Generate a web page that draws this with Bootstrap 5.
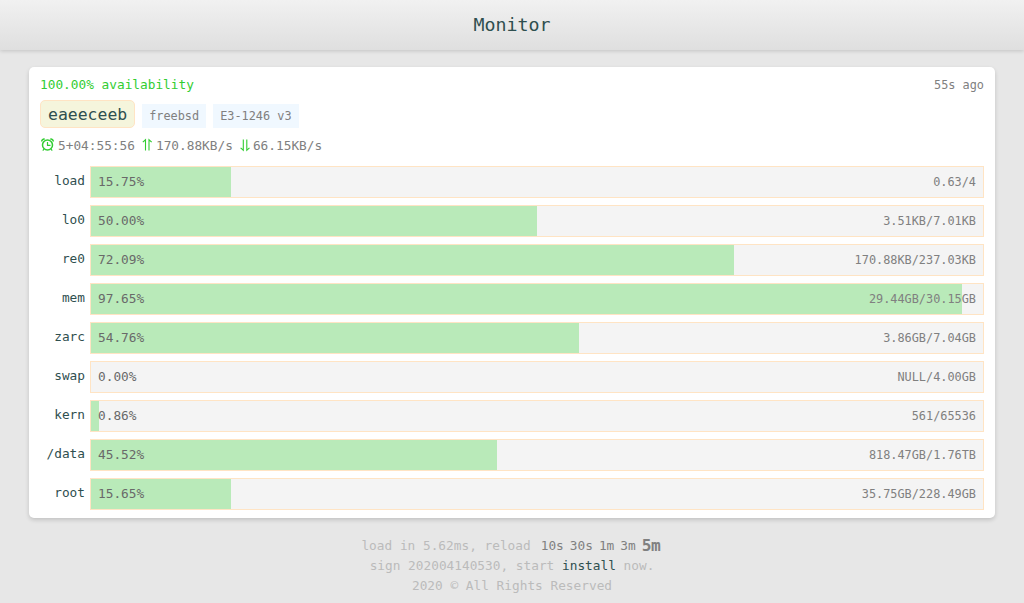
<!DOCTYPE html>
<html lang="en">
<head>
<meta charset="utf-8">
<meta name="viewport" content="width=device-width, initial-scale=1">
<title>Monitor</title>
<link href="https://cdn.jsdelivr.net/npm/bootstrap@5.3.0/dist/css/bootstrap.min.css" rel="stylesheet">
<style>
body{font-family:"DejaVu Sans Mono","Liberation Mono",monospace;font-size:12.79px;line-height:20px;color:gray;background:#e7e7e7;height:603px;overflow:hidden}
.topbar{height:50px;font-size:18.27px;color:#2f4f4f;background:linear-gradient(#f1f1f1,#dfdfdf);box-shadow:0 1px 4px rgba(0,0,0,.16)}
.host{margin:17px 29px 0;height:451px;padding:8px 11px 0;border:0;border-radius:5px;box-shadow:0 2px 4px rgba(0,0,0,.16)}
.fs-sm{font-size:11.87px}
.avail{color:#32cd32}
.host-name{height:28px;padding:0 7px;font-size:16.44px;line-height:27px;color:#2f4f4f;background:#f5f5dc;border:1px solid #ffe4c4;border-radius:5px}
.tag{height:24px;padding:0 7px;line-height:24px;background:#f0f8ff}
.tags{gap:7px;margin-top:5px}
.stats{margin-top:8px;height:20px}
.stats svg{display:block;fill:none;stroke:#32cd32}
.meters{margin-top:10px;gap:7px}
.meter-label{width:45px;margin-right:5px;line-height:29px;color:#2f4f4f}
.meter{height:32px;border:1px solid #ffe4c4;background:#f4f4f4}
.fill{background:#b9eab9}
.meter-text{padding:0 7px;line-height:31px}
.pct{color:#696969;line-height:29px}
.foot{margin-top:18px;color:#bbb}
.foot a{color:gray;text-decoration:none}
.foot a.on{font-size:16.2px;font-weight:bold;letter-spacing:-.3px}
.foot a.go{color:#2f4f4f}
.reload{gap:6px;padding-right:2px}
</style>
</head>
<body>
<header class="topbar d-flex align-items-center justify-content-center">Monitor</header>
<main class="host card">
  <div class="d-flex justify-content-between"><span class="avail">100.00% availability</span><span class="fs-sm">55s ago</span></div>
  <div class="tags d-flex align-items-end"><span class="host-name">eaeeceeb</span><span class="tag fs-sm">freebsd</span><span class="tag fs-sm">E3-1246 v3</span></div>
  <div class="stats d-flex align-items-center">
    <svg width="18" height="20" viewBox="0 0 18 20" stroke-width="1.5"><circle cx="7.5" cy="9" r="5"/><path stroke-width="1.2" d="M7.5 6v3.4h3M4 13l-1.2 1.6M11 13l1.2 1.6"/><path d="M1.7 5.4c0-1.7 1.5-2.6 3-2.2M13.3 5.4c0-1.7-1.5-2.6-3-2.2"/></svg>
    <span>5+04:55:56</span>
    <svg width="21" height="20" viewBox="0 0 21 20" stroke-width="1.1"><path d="M10.5 14.5V3.8L7.8 6.2M14 14.5V3.8l2.7 2.4"/></svg>
    <span>170.88KB/s</span>
    <svg width="20" height="20" viewBox="0 0 20 20" stroke-width="1.1"><path d="M10.3 3.5v10.7l-2.7-2.4M13.8 3.5v10.7l2.7-2.4"/></svg>
    <span>66.15KB/s</span>
  </div>
  <div class="meters d-flex flex-column" id="meters"></div>
</main>
<footer class="foot text-center">
  <div class="reload d-flex justify-content-center"><span class="me-1">load in 5.62ms, reload</span><a href="#">10s</a><a href="#">30s</a><a href="#">1m</a><a href="#">3m</a><a href="#" class="on">5m</a></div>
  <div>sign 202004140530, start <a href="#" class="go">install</a> now.</div>
  <div>2020 © All Rights Reserved</div>
</footer>
<script src="https://cdn.jsdelivr.net/npm/bootstrap@5.3.0/dist/js/bootstrap.bundle.min.js"></script>
<script>
const rows = [
  ['load','15.75','0.63/4'],['lo0','50.00','3.51KB/7.01KB'],['re0','72.09','170.88KB/237.03KB'],
  ['mem','97.65','29.44GB/30.15GB'],['zarc','54.76','3.86GB/7.04GB'],['swap','0.00','NULL/4.00GB'],
  ['kern','0.86','561/65536'],['/data','45.52','818.47GB/1.76TB'],['root','15.65','35.75GB/228.49GB']
];
document.getElementById('meters').innerHTML = rows.map(([name, pct, detail]) => `
  <div class="d-flex">
    <div class="meter-label text-end">${name}</div>
    <div class="meter flex-grow-1 position-relative">
      <div class="fill h-100" style="width:${pct}%"></div>
      <div class="meter-text position-absolute top-0 start-0 w-100 d-flex justify-content-between"><span class="pct">${pct}%</span><span class="fs-sm">${detail}</span></div>
    </div>
  </div>`).join('');
</script>
</body>
</html>
